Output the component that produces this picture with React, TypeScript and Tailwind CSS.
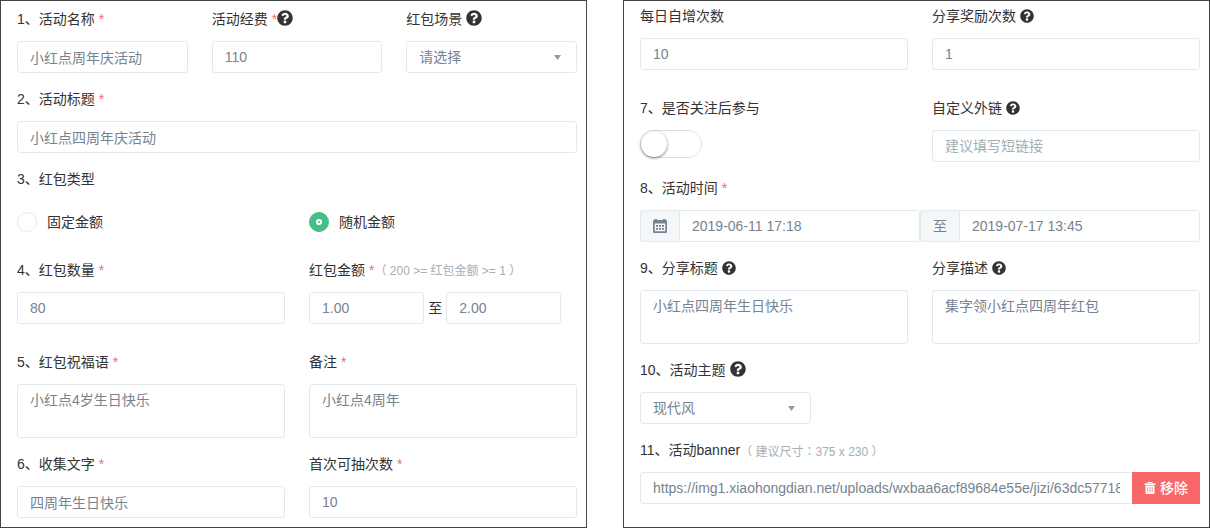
import { useState, type ReactNode } from "react";
import { FaQuestionCircle } from "react-icons/fa";
import clsx from "clsx";

const control =
  "block w-full border border-[#e4eaec] rounded-[3px] bg-white px-3 text-sm text-[#76838f] placeholder:text-[#a3afb7] focus:outline-none focus:border-[#62a8ea]";

const CalendarIcon = () => (
  <svg viewBox="0 0 14 14" className="size-3.5 fill-current" aria-hidden="true">
    <path
      fillRule="evenodd"
      d="M1.500 0h2.500v1h6V0h2.500v1H13a1 1 0 0 1 1 1v11a1 1 0 0 1-1 1H1a1 1 0 0 1-1-1V2a1 1 0 0 1 1-1h.500zM1.700 4.500v7.800h10.600V4.500z"
    />
    <path d="M3 6h2v1.800H3zM6 6h2v1.800H6zM9 6h2v1.800H9zM3 9h2v1.800H3zM6 9h2v1.800H6zM9 9h2v1.800H9z" />
  </svg>
);

const TrashIcon = () => (
  <svg viewBox="0 0 11 12" className="size-3 fill-current" aria-hidden="true">
    <path
      fillRule="evenodd"
      d="M3 0h5v1.500h3V3H0V1.500h3zM4 1v.500h3V1zM1 3.500h9V11a1 1 0 0 1-1 1H2a1 1 0 0 1-1-1zM3 5v5.500h.700V5zM5.150 5v5.500h.700V5zM7.300 5v5.500H8V5z"
    />
  </svg>
);

const Help = ({ large }: { large?: boolean }) => (
  <FaQuestionCircle
    className={clsx("text-[#333]", large ? "size-4 mb-0.5" : "size-3.5")}
    aria-hidden="true"
  />
);

const Required = () => <span className="ml-1 text-[#f96868]">*</span>;

const Hint = ({ children }: { children: ReactNode }) => (
  <span className="pt-0.5 text-xs text-[#a3afb7]">{children}</span>
);

type FieldProps = {
  id: string;
  label: string;
  required?: boolean;
  extra?: ReactNode;
  children: ReactNode;
};

const Field = ({ id, label, required, extra, children }: FieldProps) => (
  <div className="flex flex-col gap-3 min-w-0">
    <label htmlFor={id} className="flex h-5 items-center whitespace-nowrap">
      {label}
      {required && <Required />}
      {extra}
    </label>
    {children}
  </div>
);

type TextProps = { id: string; value?: string; placeholder?: string };

const TextInput = ({ id, value, placeholder }: TextProps) => (
  <input
    id={id}
    type="text"
    defaultValue={value}
    placeholder={placeholder}
    className={clsx(control, "h-8")}
  />
);

const TextArea = ({ id, value }: TextProps) => (
  <textarea
    id={id}
    defaultValue={value}
    className={clsx(control, "h-[54px] resize-none py-1 leading-[22px]")}
  />
);

const Select = ({ id, options }: { id: string; options: string[] }) => (
  <div className="relative">
    <select id={id} className={clsx(control, "h-8 appearance-none")}>
      {options.map((option) => (
        <option key={option}>{option}</option>
      ))}
    </select>
    <svg
      viewBox="0 0 7 5"
      className="pointer-events-none absolute right-4 top-3.5 h-[5px] w-[7px] fill-[#8f9ca5]"
      aria-hidden="true"
    >
      <path d="M0 0h7L3.500 5z" />
    </svg>
  </div>
);

const DateInput = ({
  id,
  value,
  addon,
  label,
}: {
  id: string;
  value: string;
  addon: ReactNode;
  label?: string;
}) => (
  <div className="flex flex-1 min-w-0">
    <span className="flex h-8 w-[39px] shrink-0 items-center justify-center rounded-l-[3px] border border-r-0 border-[#e4eaec] bg-[#f3f7f9] text-[#76838f]">
      {addon}
    </span>
    <input
      id={id}
      type="text"
      aria-label={label}
      defaultValue={value}
      className={clsx(control, "h-8 min-w-0 rounded-l-none")}
    />
  </div>
);

const Panel = ({ className, children }: { className: string; children: ReactNode }) => (
  <section
    className={clsx("flex flex-col border border-[#444] pl-4 pr-[9px]", className)}
  >
    {children}
  </section>
);

const App = () => {
  const [amountType, setAmountType] = useState("随机金额");

  return (
    <form
      lang="zh-CN"
      className="grid grid-cols-2 gap-9 bg-white font-['Liberation_Sans','Noto_Sans_CJK_SC',sans-serif] text-sm text-[#333]"
    >
      <Panel className="gap-4 pt-2 pb-[9px]">
        <div className="grid grid-cols-3 gap-6">
          <Field id="name" label="1、活动名称" required>
            <TextInput id="name" value="小红点周年庆活动" />
          </Field>
          <Field id="budget" label="活动经费" required extra={<Help large />}>
            <TextInput id="budget" value="110" />
          </Field>
          <Field
            id="scene"
            label="红包场景"
            extra={<span className="ml-1"><Help large /></span>}
          >
            <Select id="scene" options={["请选择"]} />
          </Field>
        </div>

        <Field id="title" label="2、活动标题" required>
          <TextInput id="title" value="小红点四周年庆活动" />
        </Field>

        <div role="radiogroup" aria-labelledby="amount-type">
          <div id="amount-type" className="flex h-5 items-center">
            3、红包类型
          </div>
          <div className="mt-3 grid grid-cols-2 gap-6 pt-[11px] pb-3">
            {["固定金额", "随机金额"].map((type) => (
              <label key={type} className="flex h-5 items-center gap-2.5">
                <input
                  type="radio"
                  name="amount-type"
                  checked={amountType === type}
                  onChange={() => setAmountType(type)}
                  className="grid size-5 appearance-none place-content-center rounded-full border border-[#e4eaec] bg-white checked:border-[#46be8a] checked:bg-[#46be8a] checked:before:size-1.5 checked:before:rounded-full checked:before:border-2 checked:before:border-white checked:before:content-['']"
                />
                {type}
              </label>
            ))}
          </div>
        </div>

        <div className="grid grid-cols-2 gap-6 pb-3">
          <Field id="count" label="4、红包数量" required>
            <TextInput id="count" value="80" />
          </Field>
          <Field
            id="min-amount"
            label="红包金额"
            required
            extra={<Hint>（ 200 &gt;= 红包金额 &gt;= 1 ）</Hint>}
          >
            <div className="flex items-center gap-1">
              <div className="w-[43%]">
                <TextInput id="min-amount" value="1.00" />
              </div>
              <label htmlFor="max-amount">至</label>
              <div className="w-[43%]">
                <TextInput id="max-amount" value="2.00" />
              </div>
            </div>
          </Field>
        </div>

        <div className="grid grid-cols-2 gap-6">
          <Field id="greeting" label="5、红包祝福语" required>
            <TextArea id="greeting" value="小红点4岁生日快乐" />
          </Field>
          <Field id="remark" label="备注" required>
            <TextArea id="remark" value="小红点4周年" />
          </Field>
        </div>

        <div className="grid grid-cols-2 gap-6">
          <Field id="words" label="6、收集文字" required>
            <TextInput id="words" value="四周年生日快乐" />
          </Field>
          <Field id="first-draws" label="首次可抽次数" required>
            <TextInput id="first-draws" value="10" />
          </Field>
        </div>
      </Panel>

      <Panel className="gap-4 pt-[5px]">
        <div className="grid grid-cols-2 gap-6 pb-3">
          <Field id="daily" label="每日自增次数">
            <TextInput id="daily" value="10" />
          </Field>
          <Field
            id="share-bonus"
            label="分享奖励次数"
            extra={<span className="ml-1"><Help /></span>}
          >
            <TextInput id="share-bonus" value="1" />
          </Field>
        </div>

        <div className="grid grid-cols-2 gap-6">
          <Field id="follow" label="7、是否关注后参与">
            <input
              id="follow"
              type="checkbox"
              role="switch"
              className="flex h-7 w-[62px] appearance-none rounded-full border border-[#dfdfdf] bg-white before:size-[26px] before:rounded-full before:bg-white before:shadow-[0_1px_3px_rgba(0,0,0,0.5)] before:content-[''] checked:justify-end checked:bg-[#46be8a]"
            />
          </Field>
          <Field
            id="link"
            label="自定义外链"
            extra={<span className="ml-1"><Help /></span>}
          >
            <TextInput id="link" placeholder="建议填写短链接" />
          </Field>
        </div>

        <Field id="start" label="8、活动时间" required>
          <div className="flex">
            <DateInput id="start" value="2019-06-11 17:18" addon={<CalendarIcon />} />
            <DateInput id="end" value="2019-07-17 13:45" addon="至" label="至" />
          </div>
        </Field>

        <div className="grid grid-cols-2 gap-6">
          <Field
            id="share-title"
            label="9、分享标题"
            extra={<span className="ml-1"><Help /></span>}
          >
            <TextArea id="share-title" value="小红点四周年生日快乐" />
          </Field>
          <Field
            id="share-desc"
            label="分享描述"
            extra={<span className="ml-1"><Help /></span>}
          >
            <TextArea id="share-desc" value="集字领小红点四周年红包" />
          </Field>
        </div>

        <div className="grid grid-cols-3 gap-6">
          <Field
            id="theme"
            label="10、活动主题"
            extra={<span className="ml-1"><Help large /></span>}
          >
            <Select id="theme" options={["现代风"]} />
          </Field>
        </div>

        <Field
          id="banner"
          label="11、活动banner"
          extra={
            <Hint>
              （ 建议尺寸<span className="font-['Noto_Sans_CJK_TC',sans-serif]" lang="zh-TW">：</span>375 x 230 ）
            </Hint>
          }
        >
          <div className="flex">
            <input
              id="banner"
              type="text"
              defaultValue="https://img1.xiaohongdian.net/uploads/wxbaa6acf89684e55e/jizi/63dc577182f4.png"
              className={clsx(control, "h-8 min-w-0 flex-1 rounded-r-none border-r-0")}
            />
            <button
              type="button"
              className="flex h-8 shrink-0 items-center gap-1 bg-[#f96868] px-3 font-medium text-white"
            >
              <TrashIcon />
              移除
            </button>
          </div>
        </Field>
      </Panel>
    </form>
  );
};

export default App;
